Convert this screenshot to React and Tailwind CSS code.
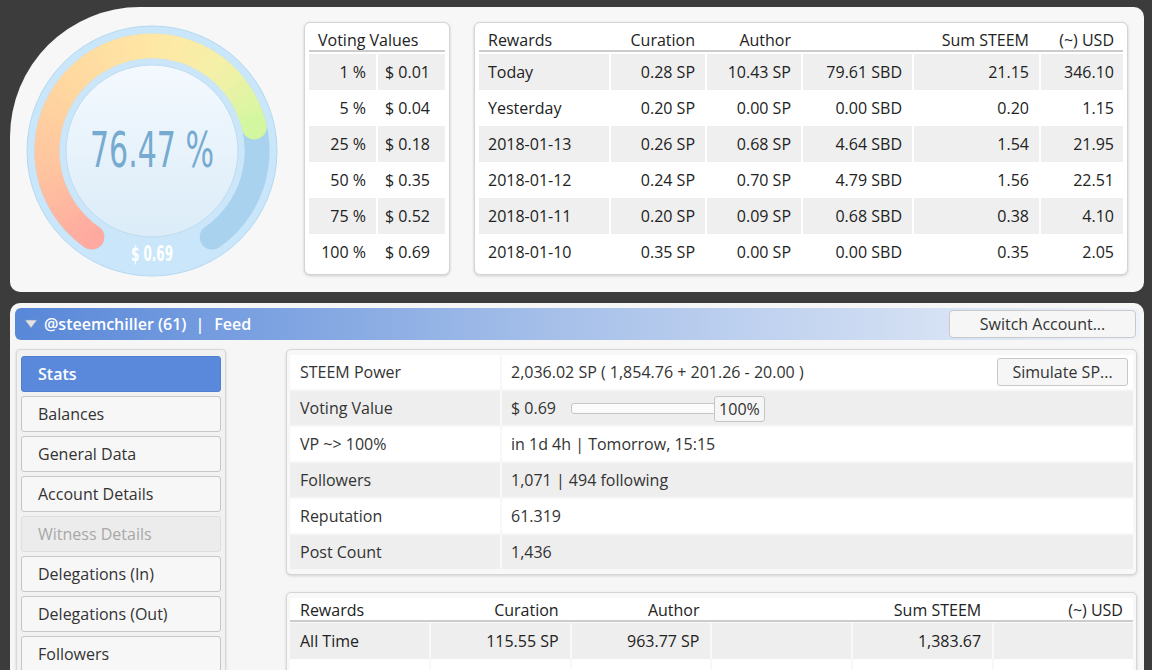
import React from "react";

const C = 126;
function polar(r, deg) {
  const a = (deg * Math.PI) / 180;
  return [C + r * Math.sin(a), C - r * Math.cos(a)];
}
function arc(r, a0, a1) {
  const [x0, y0] = polar(r, a0);
  const [x1, y1] = polar(r, a1);
  const large = a1 - a0 > 180 ? 1 : 0;
  return `M ${x0} ${y0} A ${r} ${r} 0 ${large} 1 ${x1} ${y1}`;
}
const stops = [
  [-145, [255, 170, 160]],
  [-100, [255, 196, 160]],
  [-50, [255, 216, 160]],
  [0, [255, 231, 165]],
  [40, [244, 240, 168]],
  [77, [210, 247, 160]],
];
function colorAt(deg) {
  for (let i = 0; i < stops.length - 1; i++) {
    const [a0, c0] = stops[i];
    const [a1, c1] = stops[i + 1];
    if (deg <= a1 || i === stops.length - 2) {
      const t = Math.max(0, Math.min(1, (deg - a0) / (a1 - a0)));
      const c = c0.map((v, k) => Math.round(v + (c1[k] - v) * t));
      return `rgb(${c[0]},${c[1]},${c[2]})`;
    }
  }
  return "#fff";
}

function Gauge() {
  const start = -145;
  const end = 76.8;
  const N = 60;
  const segs = [];
  for (let i = 0; i < N; i++) {
    const a0 = start + ((end - start) * i) / N;
    const a1 = start + ((end - start) * (i + 1)) / N;
    segs.push(
      <path
        key={i}
        d={arc(105, a0, Math.min(end, a1 + 0.6))}
        stroke={colorAt((a0 + a1) / 2)}
        strokeWidth="25"
        fill="none"
      />
    );
  }
  const [sx, sy] = polar(105, start);
  const [ex, ey] = polar(105, end);
  return (
    <svg width="252" height="252" viewBox="0 0 252 252" className="block">
      <defs>
        <linearGradient id="disc" x1="0" y1="0" x2="0" y2="1">
          <stop offset="0" stopColor="#f4f9fe" />
          <stop offset="1" stopColor="#dbecf8" />
        </linearGradient>
      </defs>
      <circle cx={C} cy={C} r="125" fill="#c9e6fa" stroke="#b4d9f2" strokeWidth="1" />
      <path d={arc(105, -145, 145)} stroke="#a8d2ed" strokeWidth="25" fill="none" strokeLinecap="round" />
      <circle cx={sx} cy={sy} r="12.5" fill={colorAt(start)} />
      {segs}
      <circle cx={ex} cy={ey} r="12.5" fill={colorAt(end)} />
      <circle cx={C} cy={C} r="92.5" fill="#cbe6f9" />
      <circle cx={C} cy={C} r="86" fill="url(#disc)" stroke="#bcdcf2" strokeWidth="1" />
      <text
        x={C}
        y="142"
        textAnchor="middle"
        fill="#76aad1"
        fontSize="49"
        textLength="124"
        lengthAdjust="spacingAndGlyphs"
        style={{ fontFamily: "'DejaVu Sans Condensed', 'DejaVu Sans', sans-serif" }}
      >
        76.47 %
      </text>
      <text
        x={C}
        y="236"
        textAnchor="middle"
        fill="#ffffff"
        fontSize="22"
        fontWeight="bold"
        textLength="42"
        lengthAdjust="spacingAndGlyphs"
        style={{ fontFamily: "'DejaVu Sans Condensed', 'DejaVu Sans', sans-serif" }}
      >
        $ 0.69
      </text>
    </svg>
  );
}

const voting = [
  ["1 %", "$ 0.01"],
  ["5 %", "$ 0.04"],
  ["25 %", "$ 0.18"],
  ["50 %", "$ 0.35"],
  ["75 %", "$ 0.52"],
  ["100 %", "$ 0.69"],
];

const rewards = [
  ["Today", "0.28 SP", "10.43 SP", "79.61 SBD", "21.15", "346.10"],
  ["Yesterday", "0.20 SP", "0.00 SP", "0.00 SBD", "0.20", "1.15"],
  ["2018-01-13", "0.26 SP", "0.68 SP", "4.64 SBD", "1.54", "21.95"],
  ["2018-01-12", "0.24 SP", "0.70 SP", "4.79 SBD", "1.56", "22.51"],
  ["2018-01-11", "0.20 SP", "0.09 SP", "0.68 SBD", "0.38", "4.10"],
  ["2018-01-10", "0.35 SP", "0.00 SP", "0.00 SBD", "0.35", "2.05"],
];

const navItems = [
  "Balances",
  "General Data",
  "Account Details",
  "Witness Details",
  "Delegations (In)",
  "Delegations (Out)",
  "Followers",
];

function VotingBox() {
  return (
    <div className="mt-[15px] w-[146px] h-[253px] bg-white border border-[#d4d4d4] rounded-[6px] shadow-[0_1px_3px_rgba(0,0,0,0.18)] p-[4px]">
      <div className="h-[25px] border-b-2 border-[#cccccc] pl-[9px] leading-[27px]">Voting Values</div>
      {voting.map((r, i) => (
        <div key={i} className="mt-[2px] h-[34px] grid grid-cols-[67px_67px] gap-x-[2px]">
          <div className={`${i % 2 === 0 ? "bg-[#efefef]" : "bg-white"} text-right pr-[10px] leading-[36px]`}>{r[0]}</div>
          <div className={`${i % 2 === 0 ? "bg-[#efefef]" : "bg-white"} pl-[7px] leading-[36px]`}>{r[1]}</div>
        </div>
      ))}
    </div>
  );
}

function RewardsBox() {
  const cols = "grid grid-cols-[130px_94px_94px_109px_125px_82px] gap-x-[2px]";
  return (
    <div className="mt-[15px] ml-[24px] w-[654px] h-[253px] bg-white border border-[#d4d4d4] rounded-[6px] shadow-[0_1px_3px_rgba(0,0,0,0.18)] p-[4px]">
      <div className={`${cols} h-[25px] border-b-2 border-[#cccccc] leading-[27px]`}>
        <div className="pl-[9px]">Rewards</div>
        <div className="text-right pr-[10px]">Curation</div>
        <div className="text-right pr-[10px]">Author</div>
        <div></div>
        <div className="text-right pr-[10px]">Sum STEEM</div>
        <div className="text-right pr-[9px]">(~) USD</div>
      </div>
      {rewards.map((r, i) => {
        const bg = i % 2 === 0 ? "bg-[#efefef]" : "bg-white";
        return (
          <div key={i} className={`${cols} mt-[2px] h-[34px] leading-[36px]`}>
            <div className={`${bg} pl-[9px]`}>{r[0]}</div>
            <div className={`${bg} text-right pr-[10px]`}>{r[1]}</div>
            <div className={`${bg} text-right pr-[10px]`}>{r[2]}</div>
            <div className={`${bg} text-right pr-[10px]`}>{r[3]}</div>
            <div className={`${bg} text-right pr-[10px]`}>{r[4]}</div>
            <div className={`${bg} text-right pr-[9px]`}>{r[5]}</div>
          </div>
        );
      })}
    </div>
  );
}

function Nav() {
  return (
    <div className="mt-[9px] ml-[1px] w-[210px] h-[340px] shrink-0 bg-[#f1f1f1] border border-[#d8d8d8] rounded-[4px] shadow-[0_1px_3px_rgba(0,0,0,0.15)] pt-[6px] pl-[4px]">
      <div className="w-[200px] h-[36px] bg-[#5a89db] border border-[#4f7fd2] rounded-[3px] text-white font-semibold pl-[16px] leading-[34px]">
        Stats
      </div>
      {navItems.map((n) => {
        const dis = n === "Witness Details";
        return (
          <div
            key={n}
            className={`mt-[4px] w-[200px] h-[36px] rounded-[3px] border pl-[16px] leading-[34px] ${
              dis ? "bg-[#ececec] border-[#dedede] text-[#a8a8a8]" : "bg-[#f7f7f7] border-[#c6c6c6] text-[#333]"
            }`}
          >
            {n}
          </div>
        );
      })}
    </div>
  );
}

const stats = [
  ["STEEM Power", "sp"],
  ["Voting Value", "vv"],
  ["VP ~> 100%", "in 1d 4h | Tomorrow, 15:15"],
  ["Followers", "1,071 | 494 following"],
  ["Reputation", "61.319"],
  ["Post Count", "1,436"],
];

function StatsPanel() {
  return (
    <div className="w-[851px] h-[226px] bg-[#f8f8f8] border border-[#d6d6d6] rounded-[5px] shadow-[0_1px_3px_rgba(0,0,0,0.15)] py-[5px] px-[3px]">
      {stats.map((r, i) => {
        const bg = i % 2 === 0 ? "bg-white" : "bg-[#eeeeee]";
        return (
          <div key={i} className={`grid grid-cols-[210px_1fr] gap-x-[2px] h-[34px] ${i > 0 ? "mt-[2px]" : ""}`}>
            <div className={`${bg} pl-[10px] leading-[34px] text-[#333]`}>{r[0]}</div>
            <div className={`${bg} pl-[9px] leading-[34px] text-[#333] flex items-center`}>
              {r[1] === "sp" ? (
                <>
                  <span>2,036.02 SP ( 1,854.76 + 201.26 - 20.00 )</span>
                  <div className="ml-auto mr-[5px] w-[131px] h-[28px] bg-[#f6f6f6] border border-[#c8c8c8] rounded-[3px] text-center leading-[26px]">
                    Simulate SP...
                  </div>
                </>
              ) : r[1] === "vv" ? (
                <>
                  <span>$ 0.69</span>
                  <div className="relative ml-[15px] w-[147px] h-[11px] bg-[#fbfbfb] border border-[#c6c6c6] rounded-[3px]">
                    <div className="absolute left-[142px] top-[-8px] w-[51px] h-[26px] bg-[#f6f6f6] border border-[#c5c5c5] rounded-[3px] text-center leading-[24px]">
                      100%
                    </div>
                  </div>
                </>
              ) : (
                <span>{r[1]}</span>
              )}
            </div>
          </div>
        );
      })}
    </div>
  );
}

function AllTimePanel() {
  const cols = "grid grid-cols-6 gap-x-[2px]";
  return (
    <div className="mt-[17px] w-[851px] h-[120px] bg-[#f8f8f8] border border-[#d6d6d6] rounded-[5px] shadow-[0_1px_3px_rgba(0,0,0,0.15)] pt-[5px] px-[3px]">
      <div className={`${cols} h-[24px] bg-white border-b-2 border-[#cccccc] leading-[24px]`}>
        <div className="pl-[10px]">Rewards</div>
        <div className="text-right pr-[11px]">Curation</div>
        <div className="text-right pr-[11px]">Author</div>
        <div></div>
        <div className="text-right pr-[11px]">Sum STEEM</div>
        <div className="text-right pr-[10px]">(~) USD</div>
      </div>
      <div className={`${cols} mt-[1px] h-[34px] leading-[37px]`}>
        <div className="bg-[#eeeeee] pl-[10px]">All Time</div>
        <div className="bg-[#eeeeee] text-right pr-[11px]">115.55 SP</div>
        <div className="bg-[#eeeeee] text-right pr-[11px]">963.77 SP</div>
        <div className="bg-[#eeeeee]"></div>
        <div className="bg-[#eeeeee] text-right pr-[11px]">1,383.67</div>
        <div className="bg-[#eeeeee]"></div>
      </div>
      <div className={`${cols} mt-[2px] h-[34px]`}>
        <div className="bg-white"></div>
        <div className="bg-white"></div>
        <div className="bg-white"></div>
        <div className="bg-white"></div>
        <div className="bg-white"></div>
        <div className="bg-white"></div>
      </div>
    </div>
  );
}

export default function App() {
  return (
    <div
      className="w-[1152px] h-[670px] overflow-hidden bg-[#3c3c3c] pl-[10px] pt-[7px] text-[16px] text-[#222]"
      style={{ fontFamily: "'Open Sans', 'Noto Sans', sans-serif" }}
    >
      <div className="w-[1134px] h-[285px] bg-[#f7f7f7] rounded-[10px] rounded-tl-[130px] flex">
        <div className="ml-[16px] mt-[18px]">
          <Gauge />
        </div>
        <div className="ml-[26px]">
          <VotingBox />
        </div>
        <RewardsBox />
      </div>
      <div className="mt-[11px] w-[1134px] h-[400px] bg-[#f6f6f6] rounded-t-[10px] pt-[5px] pl-[5px]">
        <div className="w-[1125px] h-[32px] rounded-[6px] bg-gradient-to-r from-[#5887d8] via-[#a9c2ea] to-[#eef2f9] flex items-center">
          <svg width="14" height="10" viewBox="0 0 14 10" className="ml-[9px]">
            <polygon points="1,1 13,1 7,9" fill="#e4e4e4" stroke="#7f95b8" strokeWidth="0.6" />
          </svg>
          <span className="ml-[6px] text-white font-semibold">@steemchiller (61)</span>
          <span className="ml-[9px] text-white font-semibold">|</span>
          <span className="ml-[10px] text-white font-semibold">Feed</span>
          <div className="ml-auto mr-[4px] w-[187px] h-[28px] bg-[#f6f6f6] border border-[#c9c9c9] rounded-[4px] text-center leading-[26px] text-[#333]">
            Switch Account...
          </div>
        </div>
        <div className="flex">
          <Nav />
          <div className="ml-[60px] mt-[9px]">
            <StatsPanel />
            <AllTimePanel />
          </div>
        </div>
      </div>
    </div>
  );
}
